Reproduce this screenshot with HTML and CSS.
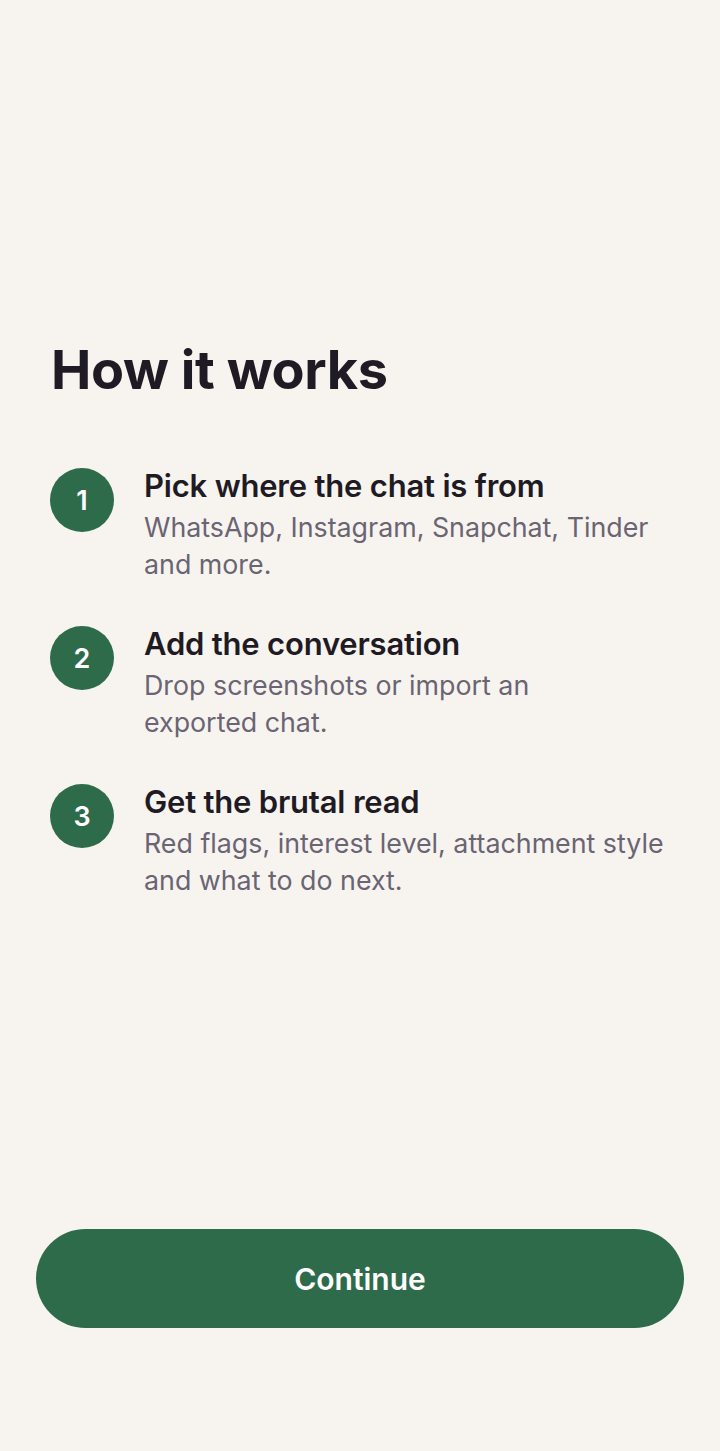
FILE: index.html
```html
<!DOCTYPE html>
<html>
<head>
<meta charset="utf-8">
<link rel="stylesheet" href="styles.css">
</head>
<body>
<main class="screen">
  <section class="content">
    <h1 class="title">How it works</h1>
    <ol class="steps">
      <li class="step">
        <span class="num">1</span>
        <div class="text">
          <h2 class="step-title">Pick where the chat is from</h2>
          <p class="step-desc">WhatsApp, Instagram, Snapchat, Tinder and more.</p>
        </div>
      </li>
      <li class="step">
        <span class="num">2</span>
        <div class="text">
          <h2 class="step-title">Add the conversation</h2>
          <p class="step-desc">Drop screenshots or import an<br>exported chat.</p>
        </div>
      </li>
      <li class="step">
        <span class="num">3</span>
        <div class="text">
          <h2 class="step-title">Get the brutal read</h2>
          <p class="step-desc">Red flags, interest level, attachment style and what to do next.</p>
        </div>
      </li>
    </ol>
  </section>
  <div class="footer">
    <button class="cta">Continue</button>
  </div>
</main>
</body>
</html>
```

FILE: styles.css
```css
* { box-sizing: border-box; }
html, body {
  margin: 0;
  padding: 0;
  background: #f7f4ef;
}
body {
  font-family: Inter, "Noto Sans", sans-serif;
  color: #1f1b24;
}
.screen {
  min-height: 1451px;
  display: flex;
  flex-direction: column;
}
.content {
  flex: 1;
  padding: 336px 40px 0 50px;
}
.title {
  margin: 0 0 64px 1px;
  font-size: 54px;
  line-height: 68px;
  font-weight: 700;
  letter-spacing: -0.4px;
}
.steps {
  list-style: none;
  margin: 0;
  padding: 0;
  display: flex;
  flex-direction: column;
  gap: 43px;
}
.step {
  display: flex;
  align-items: flex-start;
  gap: 30px;
}
.num {
  flex: none;
  width: 64px;
  height: 64px;
  border-radius: 50%;
  background: #2e6b4b;
  color: #fff;
  display: flex;
  align-items: center;
  justify-content: center;
  font-size: 27px;
  font-weight: 600;
}
.text {
  flex: 1;
  max-width: 530px;
}
.step-title {
  margin: 0;
  font-size: 31px;
  line-height: 36px;
  font-weight: 600;
  letter-spacing: -0.2px;
}
.step-desc {
  margin: 5px 0 0;
  font-size: 26.8px;
  line-height: 37px;
  color: #6a6473;
}
.footer {
  padding: 0 36px 123px;
}
.cta {
  width: 100%;
  height: 99px;
  border: none;
  border-radius: 50px;
  background: #2e6b4b;
  color: #fff;
  font-family: Inter, sans-serif;
  font-size: 30px;
  font-weight: 600;
}
```
